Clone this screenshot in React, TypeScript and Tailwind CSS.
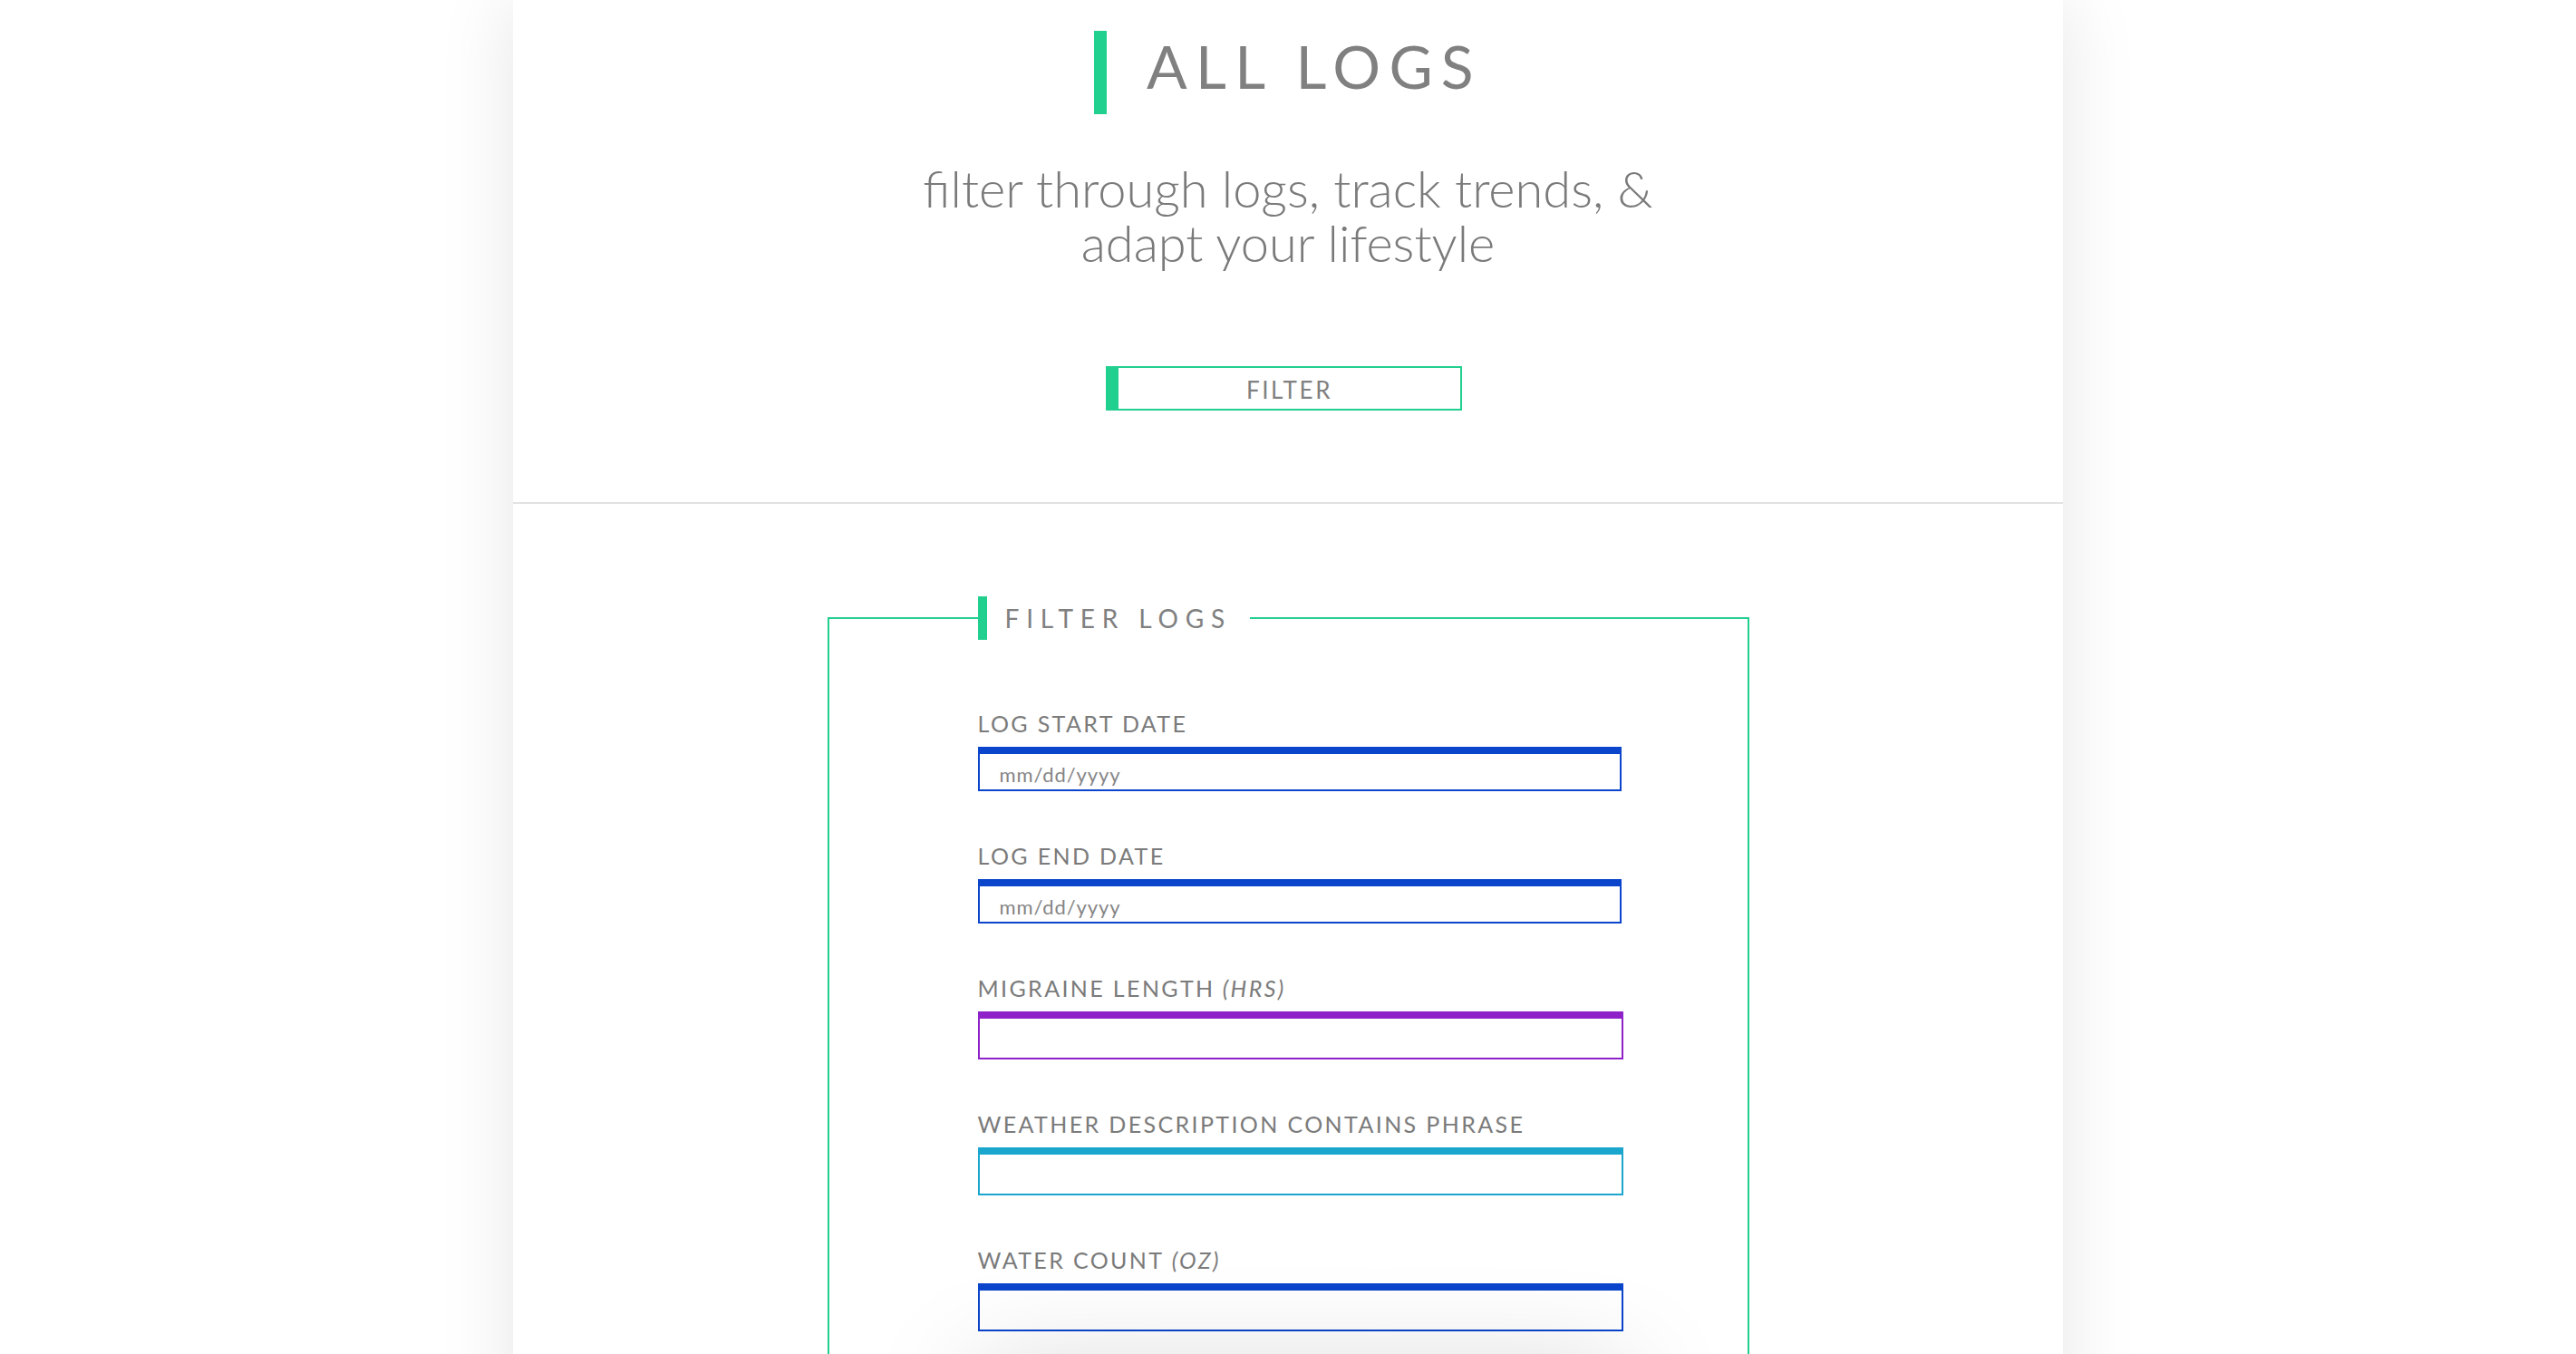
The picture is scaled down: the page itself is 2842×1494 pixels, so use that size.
const GREEN = 'border-[#21cf8f]';

interface Field {
  label: string;
  unit?: string;
  placeholder?: string;
  color: string;
  date?: boolean;
}

const fields: Field[] = [
  { label: 'LOG START DATE', placeholder: 'mm/dd/yyyy', color: 'border-[#0b45cc]', date: true },
  { label: 'LOG END DATE', placeholder: 'mm/dd/yyyy', color: 'border-[#0b45cc]', date: true },
  { label: 'MIGRAINE LENGTH', unit: '(HRS)', color: 'border-[#8f21c9]' },
  { label: 'WEATHER DESCRIPTION CONTAINS PHRASE', color: 'border-[#1ba6cd]' },
  { label: 'WATER COUNT', unit: '(OZ)', color: 'border-[#0b45cc]' },
];

function FilterField({ field, first }: { field: Field; first: boolean }) {
  const id = field.label.toLowerCase().replace(/\s+/g, '-');
  return (
    <div className={first ? '' : 'mt-[56px]'}>
      <label htmlFor={id} className="block text-[25px] leading-[30px] tracking-[0.095em] text-[#7b7b7b]">
        {field.label}
        {field.unit && <span className="italic"> {field.unit}</span>}
      </label>
      <input
        id={id}
        type="text"
        placeholder={field.placeholder}
        className={`mt-[11px] block ${field.date ? 'h-[49px] w-[710px]' : 'h-[53px] w-[712px]'} border-2 border-t-[8px] ${field.color} bg-transparent px-[22px] pt-[5px] text-[22px] tracking-[0.04em] text-[#555] outline-none placeholder:text-[#858585]`}
      />
    </div>
  );
}

export default function App() {
  return (
    <div className="min-h-screen bg-white font-['Lato','Liberation_Sans',sans-serif] text-[#808080]">
      <div className="mx-auto min-h-screen w-[1710px] bg-white shadow-[0_0_80px_rgba(0,0,0,0.1)]">
        {/* Page heading */}
        <header className="border-b-2 border-[#e2e2e2] pt-[34px] pb-[101px]">
          <div className="flex justify-center">
            <h1 className={`border-l-[14px] ${GREEN} pl-[44px] pt-[6px] pb-[20px] text-[66px] leading-[66px] tracking-[0.14em]`}>
              ALL LOGS
            </h1>
          </div>
          <p className="mx-auto mt-[52px] max-w-[880px] text-center text-[56px] font-light leading-[60px] text-[#7a7a7a]">
            filter through logs, track trends, &amp; adapt your lifestyle
          </p>
          <div className="mt-[106px] flex justify-center">
            <button
              type="button"
              className={`mr-[9px] h-[49px] w-[393px] border-2 border-l-[14px] ${GREEN} bg-white pt-[4px] text-[26px] leading-[41px] tracking-[0.1em] text-[#808080]`}
            >
              FILTER
            </button>
          </div>
        </header>

        {/* Filter form */}
        <section className="pt-[102px] pb-[200px]">
          <fieldset className={`mx-auto w-[1017px] border-2 ${GREEN} pl-[164px] pt-[77px] pb-[80px]`}>
            <legend className={`border-l-[10px] ${GREEN} pl-[20px] pr-[20px] text-[28px] leading-[48px] tracking-[0.28em] text-[#808080]`}>
              FILTER LOGS
            </legend>
            {fields.map((f, i) => (
              <FilterField key={f.label} field={f} first={i === 0} />
            ))}
            <div className="mt-[56px] h-[60px] w-[712px] bg-white shadow-[0_0_120px_rgba(0,0,0,0.25)]" />
          </fieldset>
        </section>
      </div>
    </div>
  );
}
